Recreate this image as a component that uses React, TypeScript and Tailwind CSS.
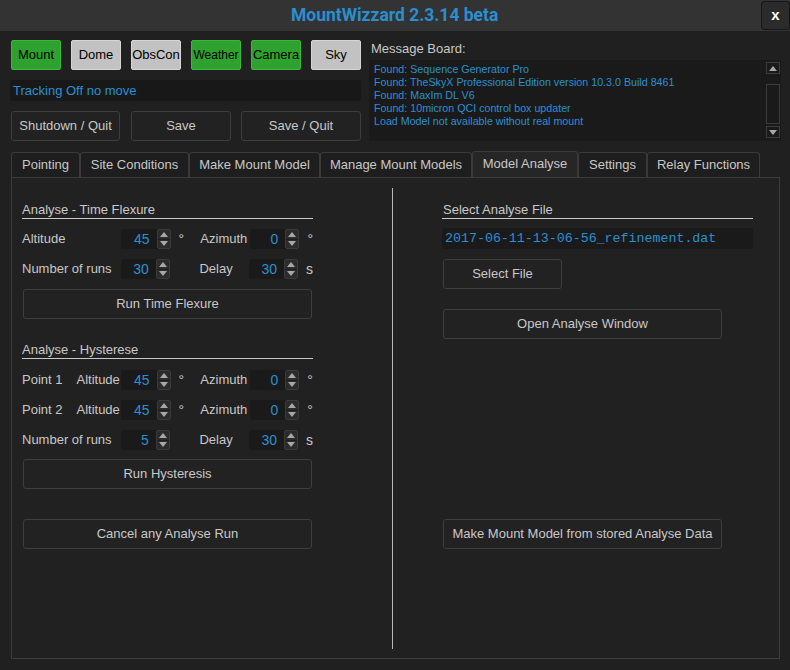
import React from "react";

const BLUE = "text-[#2a90d0]";

function Btn({ children, className = "" }: { children: React.ReactNode; className?: string }) {
  return (
    <div
      className={`flex items-center justify-center border border-[#3e3e3e] bg-[#222222] rounded-[3px] text-[#c8c8c8] ${className}`}
    >
      {children}
    </div>
  );
}

function Tri({ up }: { up?: boolean }) {
  return (
    <svg width="8" height="5" viewBox="0 0 8 5">
      {up ? <polygon points="0,5 8,5 4,0" fill="#a8a8a8" /> : <polygon points="0,0 8,0 4,5" fill="#a8a8a8" />}
    </svg>
  );
}

function Spin({ v }: { v: string }) {
  return (
    <div className="flex h-[20px] w-[50px] bg-[#1a1a1a] rounded-[2px]">
      <div className={`flex-1 flex items-center justify-end pr-[7px] text-[14px] ${BLUE}`}>{v}</div>
      <div className="w-[14px] flex flex-col border border-[#3a3a3a] bg-[#2b2b2b] rounded-[2px]">
        <div className="flex-1 flex items-center justify-center border-b border-[#1e1e1e]">
          <Tri up />
        </div>
        <div className="flex-1 flex items-center justify-center">
          <Tri />
        </div>
      </div>
    </div>
  );
}

function Row({
  label,
  sub,
  v1,
  u1,
  l2,
  v2,
  u2,
}: {
  label: string;
  sub?: string;
  v1: string;
  u1: string;
  l2: string;
  v2: string;
  u2: string;
}) {
  return (
    <div className="flex h-[20px] items-center">
      {sub ? (
        <>
          <div className="w-[55px]">{label}</div>
          <div className="w-[45px]">{sub}</div>
        </>
      ) : (
        <div className="w-[100px]">{label}</div>
      )}
      <Spin v={v1} />
      <div className="w-[30px] pl-[8px] text-[14px]">{u1}</div>
      <div className="w-[50px]">{l2}</div>
      <Spin v={v2} />
      <div className="pl-[8px] text-[14px]">{u2}</div>
    </div>
  );
}

function Header({ children }: { children: React.ReactNode }) {
  return <div className="h-[17px] leading-[16px] border-b border-[#c8c8c8]">{children}</div>;
}

const tabs: [string, number][] = [
  ["Pointing", 69],
  ["Site Conditions", 109],
  ["Make Mount Model", 131],
  ["Manage Mount Models", 152],
  ["Model Analyse", 106],
  ["Settings", 69],
  ["Relay Functions", 113],
];

export default function App() {
  return (
    <div
      className="w-[790px] h-[670px] bg-[#202020] text-[#c8c8c8] text-[13px] overflow-hidden"
      style={{ fontFamily: '"Liberation Sans", Arial, sans-serif' }}
    >
      {/* Title bar */}
      <div className="relative h-[31px] bg-[#333333] flex items-center justify-center">
        <div
          className="text-[19px] font-bold text-[#2a8fcf] scale-x-[0.92]"
          style={{ fontFamily: 'Roboto, sans-serif' }}
        >
          MountWizzard 2.3.14 beta
        </div>
        <div className="absolute right-0 top-[1px] w-[29px] h-[29px] bg-[#2b2b2b] border border-[#161616] rounded-[3px] flex items-center justify-center text-white font-bold text-[15px]">
          x
        </div>
      </div>

      {/* Top section */}
      <div className="flex pt-[9px] h-[110px]">
        <div className="w-[351px] ml-[10px] flex flex-col">
          <div className="flex gap-[10px] pl-[1px]">
            {[
              ["Mount", true],
              ["Dome", false],
              ["ObsCon", false],
              ["Weather", true],
              ["Camera", true],
              ["Sky", false],
            ].map(([n, g]) => (
              <div
                key={n as string}
                className={`w-[50px] h-[30px] rounded-[2px] flex items-center justify-center text-black border ${
                  g ? "bg-[#2ea12e] border-[#3bb83b]" : "bg-[#c2c2c2] border-[#d6d6d6]"
                } ${n === "Weather" ? "text-[12px]" : "text-[13px]"}`}
              >
                {n as string}
              </div>
            ))}
          </div>
          <div className={`mt-[10px] h-[21px] bg-[#181818] rounded-[2px] flex items-center pl-[3px] ${BLUE}`}>
            Tracking Off no move
          </div>
          <div className="mt-[10px] flex pl-[1px]">
            <Btn className="w-[109px] h-[30px]">Shutdown / Quit</Btn>
            <Btn className="w-[100px] h-[30px] ml-[11px]">Save</Btn>
            <Btn className="w-[120px] h-[30px] ml-[10px]">Save / Quit</Btn>
          </div>
        </div>
        <div className="ml-[8px] w-[412px] flex flex-col">
          <div className="pl-[2px] h-[20px] leading-[18px]">Message Board:</div>
          <div className="h-[81px] bg-[#1a1a1a] flex">
            <div className={`flex-1 pl-[5px] pt-[3px] text-[10.7px] leading-[13px] ${BLUE}`}>
              <div>Found: Sequence Generator Pro</div>
              <div>Found: TheSkyX Professional Edition version 10.3.0 Build 8461</div>
              <div>Found: MaxIm DL V6</div>
              <div>Found: 10micron QCI control box updater</div>
              <div>Load Model not available without real mount</div>
            </div>
            <div className="w-[14px] mr-[1px] flex flex-col pt-[2px] pb-[3px]">
              <div className="h-[12px] border border-[#3c3c3c] flex items-center justify-center">
                <Tri up />
              </div>
              <div className="mt-[10px] h-[40px] border border-[#3c3c3c]" />
              <div className="mt-auto h-[12px] border border-[#3c3c3c] flex items-center justify-center">
                <Tri />
              </div>
            </div>
          </div>
        </div>
      </div>

      {/* Tabs */}
      <div className="flex items-end h-[26px] mt-[10px] ml-[11px]">
        {tabs.map(([t, w]) => {
          const active = t === "Model Analyse";
          return (
            <div
              key={t}
              style={{ width: w }}
              className={`flex items-center justify-center border border-[#3a3a3a] border-b-0 rounded-t-[3px] ${
                active ? "h-[26px] bg-[#262626] pb-[1px]" : "h-[25px] bg-[#1e1e1e]"
              }`}
            >
              {t}
            </div>
          );
        })}
      </div>

      {/* Panel */}
      <div className="ml-[11px] w-[769px] h-[482px] border border-[#3c3c3c] bg-[#212121] flex">
        <div className="w-[291px] ml-[10px] pt-[24px] flex flex-col">
          <Header>Analyse - Time Flexure</Header>
          <div className="mt-[10px] flex flex-col gap-[10px]">
            <Row label="Altitude" v1="45" u1="°" l2="Azimuth" v2="0" u2="°" />
            <Row label="Number of runs" v1="30" u1="" l2="Delay" v2="30" u2="s" />
          </div>
          <Btn className="mt-[10px] h-[30px] ml-[1px] w-[289px]">Run Time Flexure</Btn>

          <div className="mt-[23px]">
            <Header>Analyse - Hysterese</Header>
          </div>
          <div className="mt-[11px] flex flex-col gap-[10px]">
            <Row label="Point 1" sub="Altitude" v1="45" u1="°" l2="Azimuth" v2="0" u2="°" />
            <Row label="Point 2" sub="Altitude" v1="45" u1="°" l2="Azimuth" v2="0" u2="°" />
            <Row label="Number of runs" v1="5" u1="" l2="Delay" v2="30" u2="s" />
          </div>
          <Btn className="mt-[9px] h-[30px] ml-[1px] w-[289px]">Run Hysteresis</Btn>
          <Btn className="mt-[30px] h-[30px] ml-[1px] w-[289px]">Cancel any Analyse Run</Btn>
        </div>

        <div className="ml-[79px] mt-[10px] mb-[9px] w-px bg-[#b8b8b8]" />

        <div className="ml-[49px] w-[311px] pt-[24px] flex flex-col">
          <Header>
            <span className="pl-[1px]">Select Analyse File</span>
          </Header>
          <div
            className={`mt-[9px] h-[21px] bg-[#1a1a1a] rounded-[2px] flex items-center pl-[3px] text-[13.3px] ${BLUE}`}
            style={{ fontFamily: '"Liberation Mono", "Courier New", monospace' }}
          >
            2017-06-11-13-06-56_refinement.dat
          </div>
          <Btn className="mt-[10px] h-[30px] ml-[1px] w-[119px]">Select File</Btn>
          <Btn className="mt-[20px] h-[30px] ml-[1px] w-[279px]">Open Analyse Window</Btn>
          <Btn className="mt-[180px] h-[30px] ml-[1px] w-[279px]">Make Mount Model from stored Analyse Data</Btn>
        </div>
      </div>
    </div>
  );
}
